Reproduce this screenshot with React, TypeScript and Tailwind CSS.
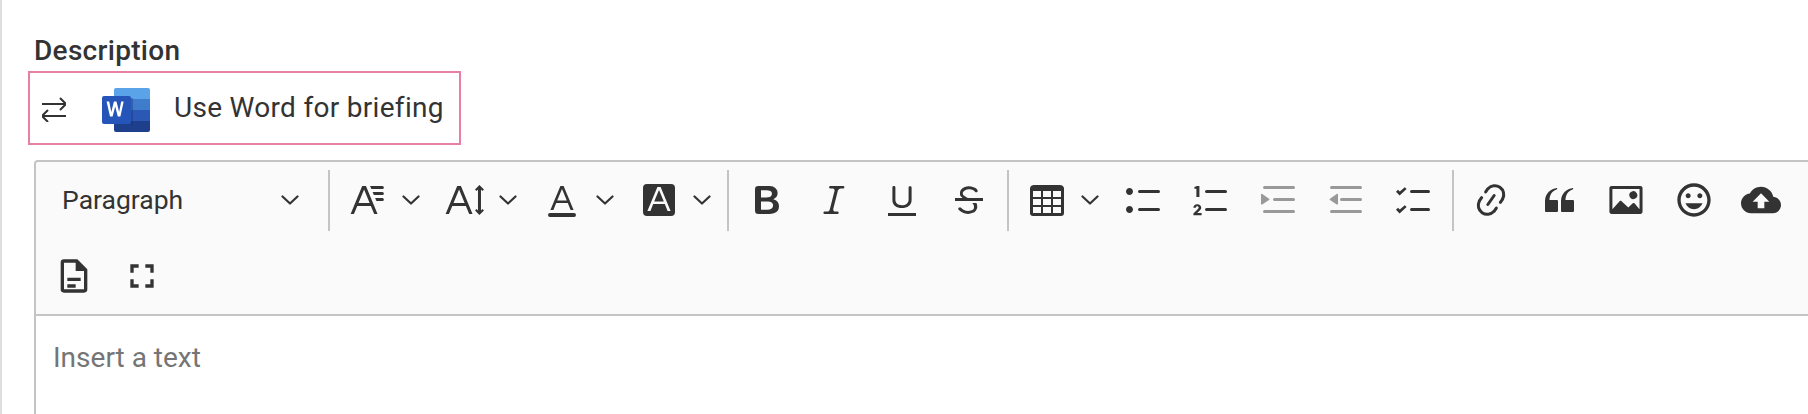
const C = "#333333";

function Ico({ d, size = 40, vb = 20, fill = C, rule }: { d: string; size?: number; vb?: number; fill?: string; rule?: "evenodd" }) {
  return (
    <svg width={size} height={size} viewBox={`0 0 ${vb} ${vb}`} className="block shrink-0">
      <path d={d} fill={fill} fillRule={rule} />
    </svg>
  );
}

function Chevron() {
  return (
    <svg width="18" height="10" viewBox="0 0 18 10" className="block shrink-0">
      <path d="M1.5 1.5 9 8.5l7.5-7" fill="none" stroke={C} strokeWidth="2.2" strokeLinecap="round" strokeLinejoin="round" />
    </svg>
  );
}

function Sep() {
  return <div className="w-[2px] h-[61px] mx-[4px] bg-[#c4c4c4] shrink-0" />;
}

function Btn({ children }: { children: React.ReactNode }) {
  return <div className="w-[67.5px] h-[76px] flex items-center justify-center shrink-0">{children}</div>;
}

function Drop({ children }: { children: React.ReactNode }) {
  return (
    <div className="w-[97.2px] h-[76px] pl-[13.7px] flex items-center gap-[14px] shrink-0">
      {children}
      <Chevron />
    </div>
  );
}

const P = {
  family: "M11.03 3h6.149a.75.75 0 1 1 0 1.5h-5.514L11.03 3zm1.27 3h4.879a.75.75 0 1 1 0 1.5h-4.244L12.3 6zm1.27 3h3.609a.75.75 0 1 1 0 1.5h-2.973L13.57 9zm-2.754 2.5L8.038 4.785 5.261 11.5h5.555zm.62 1.5H4.641l-1.666 4.028H1.312l5.789-14h1.875l5.789 14h-1.663L11.436 13z",
  size: "M9.816 11.5 7.038 4.785 4.261 11.5h5.555zm.62 1.5H3.641l-1.666 4.028H.312l5.789-14h1.875l5.789 14h-1.663L10.436 13zm7.55 2.279.779-.779.707.707-2.265 2.265-2.193-2.265.707-.707.765.765V4.825c0-.042 0-.083.002-.123l-.77.77-.707-.707L17.207 2.5l2.265 2.265-.707.707-.782-.782c.002.043.003.089.003.135v10.454z",
  color: "M12.4 10.3 10 4.5l-2.4 5.8h4.8zm.5 1.2H7.1L5.7 15H4.2l5-12h1.6l5 12h-1.5L12.9 11.5zM16 18.5H4a1 1 0 0 1 0-2h12a1 1 0 0 1 0 2z",
  bg: "M4 2h12a2 2 0 0 1 2 2v12a2 2 0 0 1-2 2H4a2 2 0 0 1-2-2V4a2 2 0 0 1 2-2zm8.4 8.8L10 5l-2.4 5.8h4.8zm.5 1.2H7.1l-1.4 3.5H4.2l5-12h1.6l5 12h-1.5L12.9 12z",
  bold: "M10.187 17H5.773c-.637 0-1.092-.138-1.364-.415-.273-.277-.409-.718-.409-1.323V4.738c0-.617.14-1.062.419-1.332.279-.27.73-.406 1.354-.406h4.68c.69 0 1.288.041 1.793.124.506.083.96.242 1.36.478.341.197.644.447.906.75a3.262 3.262 0 0 1 .808 2.162c0 1.401-.722 2.426-2.167 3.075C15.05 10.175 16 11.315 16 13.01a3.756 3.756 0 0 1-2.296 3.504 6.1 6.1 0 0 1-1.517.377c-.571.073-1.238.11-2 .11zm-.217-6.217H7v4.087h3.069c1.977 0 2.965-.69 2.965-2.072 0-.707-.256-1.22-.768-1.537-.512-.319-1.277-.478-2.296-.478zM7 5.13v3.619h2.606c.729 0 1.292-.067 1.69-.2a1.6 1.6 0 0 0 .91-.765c.165-.267.247-.566.247-.897 0-.707-.26-1.176-.778-1.409-.519-.232-1.31-.348-2.375-.348H7z",
  italic: "m9.586 14.633.021.004c-.036.335.095.655.393.962.082.083.173.15.274.201h1.474a.6.6 0 1 1 0 1.2H5.304a.6.6 0 0 1 0-1.2h1.15c.474-.07.809-.182 1.005-.334.157-.122.291-.32.404-.597l2.416-9.55a1.053 1.053 0 0 0-.281-.823 1.12 1.12 0 0 0-.442-.296H8.15a.6.6 0 0 1 0-1.2h6.443a.6.6 0 1 1 0 1.2h-1.195c-.376.056-.65.155-.823.296-.215.175-.423.439-.623.79l-2.366 9.347z",
  underline: "M3 18v-1.5h14V18zm2.2-8V3.6c0-.4.4-.6.8-.6.3 0 .7.2.7.6v6.2c0 2 1.3 2.8 3.2 2.8 1.9 0 3.4-.9 3.4-2.9V3.6c0-.3.4-.5.8-.5.3 0 .7.2.7.5V10c0 2.7-2.2 4-4.9 4-2.6 0-4.7-1.2-4.7-4z",
  strike: "M7 16.4c-.8-.4-1.5-.9-2.2-1.5a.6.6 0 0 1-.2-.5l.3-.6h1c1 1.2 2.1 1.7 3.7 1.7 1 0 1.8-.3 2.3-.6.6-.4.6-1.2.6-1.3.2-1.2-.9-2.1-.9-2.1h2.1c.3.7.4 1.2.4 1.7v.8l-.6 1.2c-.6.8-1.1 1-1.6 1.2a6 6 0 0 1-2.4.6c-1 0-1.8-.3-2.5-.6zM6.8 9 6 8.3c-.4-.5-.5-.8-.5-1.6 0-.7.1-1.3.5-1.8.4-.6 1-1 1.6-1.3a6.3 6.3 0 0 1 4.7 0 4 4 0 0 1 1.7 1l.3.7c0 .1.2.4-.2.7-.4.2-.9.1-1 0a3 3 0 0 0-1.2-1c-.4-.2-1-.3-2-.4-.7 0-1.4.2-2 .6-.8.6-1 .8-1 1.5 0 .8.5 1 1.2 1.5.6.4 1.1.7 1.9 1H6.8zM3 10.5V9h14v1.5z",
  table: "M3 5.5v3h4v-3H3zm0 4v3h4v-3H3zm0 4v3h4v-3H3zm5 3h4v-3H8v3zm5 0h4v-3h-4v3zm4-4v-3h-4v3h4zm0-4v-3h-4v3h4zm1.5 8a1.5 1.5 0 0 1-1.5 1.5H3A1.5 1.5 0 0 1 1.5 17V4c.222-.863 1.068-1.5 2-1.5h13c.932 0 1.778.637 2 1.5v13zM12 8.5v-3H8v3h4zm0 4v-3H8v3h4z",
  bullet: "M7 5.75c0 .414.336.75.75.75h9.5a.75.75 0 1 0 0-1.5h-9.5a.75.75 0 0 0-.75.75zm-6 0C1 4.784 1.777 4 2.75 4c.966 0 1.75.777 1.75 1.75 0 .966-.777 1.75-1.75 1.75C1.784 7.5 1 6.723 1 5.75zm6 9c0 .414.336.75.75.75h9.5a.75.75 0 1 0 0-1.5h-9.5a.75.75 0 0 0-.75.75zm-6 0c0-.966.777-1.75 1.75-1.75.966 0 1.75.777 1.75 1.75 0 .966-.777 1.75-1.75 1.75-.966 0-1.75-.777-1.75-1.75z",
  number: "M7 5.75c0 .414.336.75.75.75h9.5a.75.75 0 1 0 0-1.5h-9.5a.75.75 0 0 0-.75.75zm0 9c0 .414.336.75.75.75h9.5a.75.75 0 1 0 0-1.5h-9.5a.75.75 0 0 0-.75.75zM4.2 3v5.5H2.7V4.4H1.7V3.5L3 3H4.2zM1.2 17.6v-.9l2-2c.4-.4.6-.7.6-1 0-.4-.3-.6-.7-.6s-.7.3-.7.8H1.2c0-1.1.8-1.8 1.9-1.8 1.2 0 2 .7 2 1.6 0 .7-.3 1.2-1 1.8l-1 1h2.2v1.1H1.2z",
  indent: "M2 3.75c0 .414.336.75.75.75h14.5a.75.75 0 1 0 0-1.5H2.75a.75.75 0 0 0-.75.75zm5 6c0 .414.336.75.75.75h9.5a.75.75 0 1 0 0-1.5h-9.5a.75.75 0 0 0-.75.75zM2.75 16.5h14.5a.75.75 0 1 0 0-1.5H2.75a.75.75 0 1 0 0 1.5zM1.632 6.95 5.02 9.358a.4.4 0 0 1-.013.661l-3.39 2.207A.4.4 0 0 1 1 11.892V7.275a.4.4 0 0 1 .632-.326z",
  outdent: "M2 3.75c0 .414.336.75.75.75h14.5a.75.75 0 1 0 0-1.5H2.75a.75.75 0 0 0-.75.75zm5 6c0 .414.336.75.75.75h9.5a.75.75 0 1 0 0-1.5h-9.5a.75.75 0 0 0-.75.75zM2.75 16.5h14.5a.75.75 0 1 0 0-1.5H2.75a.75.75 0 1 0 0 1.5zM5.368 6.95 1.98 9.358a.4.4 0 0 0 .013.661l3.39 2.207A.4.4 0 0 0 6 11.892V7.275a.4.4 0 0 0-.632-.326z",
  todo: "M8 5.75c0 .414.336.75.75.75h8.5a.75.75 0 1 0 0-1.5h-8.5a.75.75 0 0 0-.75.75zm0 9c0 .414.336.75.75.75h8.5a.75.75 0 1 0 0-1.5h-8.5a.75.75 0 0 0-.75.75zM2.8 7.8 1 5.9l1-1 .9.9L5.4 3.6l.9.9zm0 9L1 14.9l1-1 .9.9 2.5-2.2.9.9z",
  link: "m11.077 15 .991-1.416a.75.75 0 1 1 1.229.86l-1.148 1.64a.748.748 0 0 1-.217.206 5.251 5.251 0 0 1-8.503-5.955.741.741 0 0 1 .12-.274l1.147-1.639a.75.75 0 1 1 1.228.86L4.933 10.7l.006.003a3.75 3.75 0 0 0 6.132 4.294l.006.004zm5.494-5.335a.748.748 0 0 1-.12.274l-1.147 1.639a.75.75 0 1 1-1.228-.86l.86-1.23a3.75 3.75 0 0 0-6.144-4.301l-.86 1.229a.75.75 0 0 1-1.229-.86l1.148-1.64a.748.748 0 0 1 .217-.206 5.251 5.251 0 0 1 8.503 5.955zm-4.563-2.532a.75.75 0 0 1 .184 1.045l-3.155 4.505a.75.75 0 1 1-1.229-.86l3.155-4.506a.75.75 0 0 1 1.045-.184z",
  quote: "M3 10.423a6.5 6.5 0 0 1 6.056-6.408l.038.67C6.448 5.423 5.354 7.663 5.22 10H9c.552 0 .5.432.5.986v4.511c0 .554-.448.503-1 .503h-5c-.552 0-.5-.449-.5-1.003v-4.574zm8 0a6.5 6.5 0 0 1 6.056-6.408l.038.67c-2.646.739-3.74 2.979-3.873 5.315H17c.552 0 .5.432.5.986v4.511c0 .554-.448.503-1 .503h-5c-.552 0-.5-.449-.5-1.003v-4.574z",
  image: "M6.91 10.54c.26-.23.64-.21.88.03l3.36 3.14 2.23-2.06a.64.64 0 0 1 .87 0l2.52 2.97V4.5H3.2v10.12l3.71-4.08zm10.27-7.51c.6 0 1.09.47 1.09 1.05v11.84c0 .59-.49 1.06-1.09 1.06H2.79c-.6 0-1.09-.47-1.09-1.06V4.08c0-.58.49-1.05 1.1-1.05h14.38zm-5.22 5.56a1.96 1.96 0 1 1 3.4-1.96 1.96 1.96 0 0 1-3.4 1.96z",
  smile: "M11.99 2C6.47 2 2 6.48 2 12s4.47 10 9.99 10C17.52 22 22 17.52 22 12S17.52 2 11.99 2zM12 20c-4.42 0-8-3.58-8-8s3.58-8 8-8 8 3.58 8 8-3.58 8-8 8zm3.5-9c.83 0 1.5-.67 1.5-1.5S16.33 8 15.5 8 14 8.67 14 9.5s.67 1.5 1.5 1.5zm-7 0c.83 0 1.5-.67 1.5-1.5S9.33 8 8.5 8 7 8.67 7 9.5 7.67 11 8.5 11zm3.5 6.5c2.33 0 4.31-1.46 5.11-3.5H6.89c.8 2.04 2.78 3.5 5.11 3.5z",
  upload: "M19.35 10.04C18.67 6.59 15.64 4 12 4 9.11 4 6.6 5.64 5.35 8.04 2.34 8.36 0 10.91 0 14c0 3.31 2.69 6 6 6h13c2.76 0 5-2.24 5-5 0-2.64-2.05-4.78-4.65-4.96zM14 13v4h-4v-4H7l5-5 5 5h-3z",
  doc: "M14 2H6a2 2 0 0 0-2 2v16a2 2 0 0 0 2 2h12a2 2 0 0 0 2-2V8zM18 20H6V4h7v5h5zM8 13h8v2H8zM8 17h5v2H8z",
  full: "M7 14H5v5h5v-2H7v-3zm-2-4h2V7h3V5H5v5zm12 7h-3v2h5v-5h-2v3zM14 5v2h3v3h2V5h-5z",
};

function WordIcon() {
  return (
    <svg width="48" height="44" viewBox="0 0 48 44" className="block shrink-0">
      <path d="M12 2a2 2 0 0 1 2-2h32a2 2 0 0 1 2 2v9H12z" fill="#5ba3e8" />
      <rect x="12" y="11" width="36" height="11" fill="#3f7ccb" />
      <rect x="12" y="22" width="36" height="11" fill="#2b58b5" />
      <path d="M12 33h36v9a2 2 0 0 1-2 2H14a2 2 0 0 1-2-2z" fill="#1e3f8c" />
      <rect x="29" y="10" width="2" height="28" fill="#1b2f6a" opacity="0.35" />
      <rect x="0" y="8" width="29" height="28" rx="2" fill="#2655b9" />
      <path d="M4.6 13.5h2.6l2.1 10.4 2.6-10.4h2.6l2.6 10.4 2.1-10.4h2.5l-3.3 15h-2.6l-2.6-10-2.6 10H8z" fill="#ffffff" />
    </svg>
  );
}

export default function App() {
  return (
    <div className="w-[1808px] h-[414px] overflow-hidden bg-white border-l-2 border-[#dedede] pl-[32px] pt-[36px] font-['Roboto',sans-serif] text-[#333333]">
      <div className="text-[28px] leading-[30px] font-medium tracking-[0.3px] h-[35px]">Description</div>
      <div className="-ml-[6px] w-[433px] h-[74px] border-2 border-[#e77fa7] flex items-center pl-[12px]">
        <svg width="24" height="28" viewBox="0 0 24 28" className="block shrink-0">
          <path d="M0 10h23M18 4l6 6-6 6M24 22H1M6 16l-6 6 6 6" fill="none" stroke={C} strokeWidth="2" />
        </svg>
        <div className="ml-[36px] mt-[4px]"><WordIcon /></div>
        <span className="ml-[24px] text-[28px] leading-[32px] tracking-[0.3px]">Use Word for briefing</span>
      </div>
      <div className="mt-[15px] w-[1790px] h-[300px] border-2 border-[#c4c4c4] rounded-tl-[4px]">
        <div className="bg-[#fafafa] border-b-2 border-[#c4c4c4] pl-[4.6px] flex flex-wrap items-center rounded-tl-[3px]">
          <div className="w-[283.5px] h-[76px] pl-[21.5px] pr-[25px] flex items-center justify-between shrink-0">
            <span className="text-[26.5px]">Paragraph</span>
            <Chevron />
          </div>
          <Sep />
          <Drop><Ico d={P.family} /></Drop>
          <Drop><Ico d={P.size} /></Drop>
          <Drop><Ico d={P.color} /></Drop>
          <Drop><Ico d={P.bg} rule="evenodd" /></Drop>
          <Sep />
          <Btn><Ico d={P.bold} /></Btn>
          <Btn><Ico d={P.italic} /></Btn>
          <Btn><Ico d={P.underline} /></Btn>
          <Btn><Ico d={P.strike} /></Btn>
          <Sep />
          <Drop><Ico d={P.table} /></Drop>
          <Btn><Ico d={P.bullet} /></Btn>
          <Btn><Ico d={P.number} /></Btn>
          <Btn><Ico d={P.indent} fill="#999999" /></Btn>
          <Btn><Ico d={P.outdent} fill="#999999" /></Btn>
          <Btn><Ico d={P.todo} /></Btn>
          <Sep />
          <Btn><Ico d={P.link} /></Btn>
          <Btn><Ico d={P.quote} /></Btn>
          <Btn><Ico d={P.image} /></Btn>
          <Btn><Ico d={P.smile} vb={24} /></Btn>
          <Btn><Ico d={P.upload} vb={24} /></Btn>
          <Btn><Ico d={P.doc} vb={24} /></Btn>
          <Btn><Ico d={P.full} vb={24} /></Btn>
        </div>
        <div className="bg-white pl-[17px] pt-[24px] text-[28px] leading-[36px] text-[#757575]">Insert a text</div>
      </div>
    </div>
  );
}
